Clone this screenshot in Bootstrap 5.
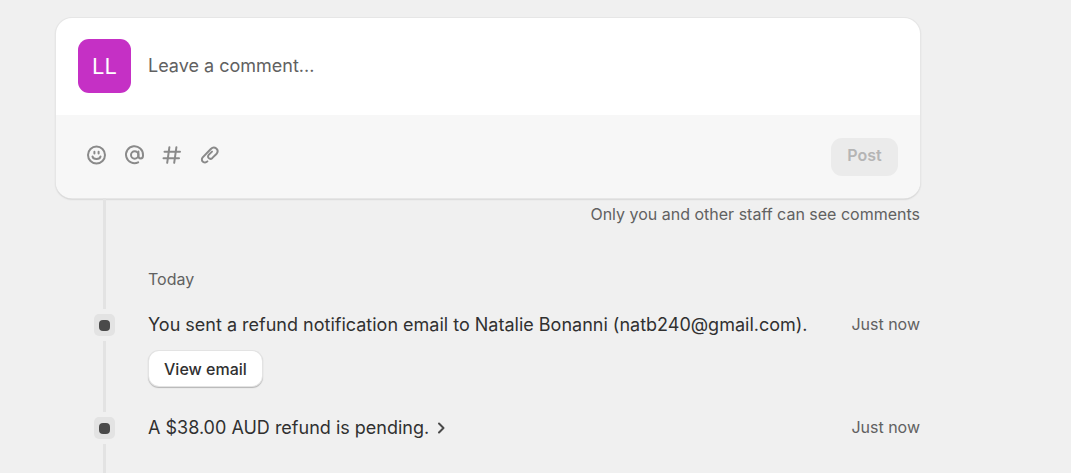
<!DOCTYPE html>
<html lang="en">
<head>
<meta charset="utf-8">
<meta name="viewport" content="width=device-width, initial-scale=1">
<title>Timeline</title>
<link rel="stylesheet" href="https://cdn.jsdelivr.net/npm/bootstrap@5.3.0/dist/css/bootstrap.min.css">
<style>
body{background:#f0f0f0;color:#303030;font-family:Inter,sans-serif;font-size:18px;line-height:22px}
.timeline-page{padding:18px 151px 0 56px}
.composer{border-radius:16px;background:#fff;box-shadow:0 0 0 1px #e6e6e6,0 1px 2px #a8a8a8}
.composer-top{padding:21px 22px 22px;gap:17px}
.avatar{width:53px;height:54px;border-radius:11px;background:#c530c5;color:#fff;font-size:22px}
.comment-input{color:#303030;font-size:18px;line-height:22px;outline:0}
.comment-input::placeholder{color:#616161;opacity:1}
.composer-bar{background:#f7f7f7;padding:23px 22px 22px 30px}
.tools{gap:16px;padding-bottom:4px}
.tool{width:22px;height:22px;color:#8a8a8a}
.tool svg,.chev svg{display:block}
.btn-post{width:67px;height:38px;border-radius:11px;font-size:16px;font-weight:600;line-height:20px}
.btn-post:disabled{background:#ebebeb;color:#b5b5b5;border:0;opacity:1}
.muted-text{color:#616161;font-size:16px;line-height:20px}
.rail{width:21px;margin:0 33px 0 38px}
.rail-line{width:3px;background:#e3e3e3}
.marker{width:21px;height:22px;border-radius:5px;background:#e3e3e3}
.marker span{width:11px;height:11px;border-radius:4px;background:#4a4a4a}
.intro{height:116px}
.staff-note{padding-top:6px}
.day{margin-top:45px}
.entry{min-height:103px}
.rail-gap{padding-bottom:5px}
.marker-gap{margin-bottom:5px}
.btn-view{height:35px;margin:15px 0 0 1px;padding:0 15px;border:0;border-radius:10px;background:#fff;color:#303030;font-size:16px;font-weight:500;line-height:20px;box-shadow:0 0 0 1px #e3e3e3,0 1px 1px 1px #b5b5b5}
.btn-view:hover{background:#fafafa}
.event-link{color:#303030;gap:6px}
</style>
</head>
<body>
<main class="timeline-page d-flex flex-column min-vh-100">
  <form class="composer overflow-hidden flex-shrink-0">
    <div class="composer-top d-flex align-items-center">
      <div class="avatar d-flex align-items-center justify-content-center flex-shrink-0">LL</div>
      <input class="comment-input border-0 bg-transparent p-0 flex-grow-1" type="text" placeholder="Leave a comment..." aria-label="Leave a comment">
    </div>
    <div class="composer-bar d-flex align-items-center justify-content-between">
      <div class="tools d-flex">
        <button class="tool btn border-0 p-0" type="button" aria-label="Add emoji">
          <svg width="22" height="22" viewBox="0 0 22 22" fill="none" stroke="currentColor" stroke-width="2" stroke-linecap="round"><circle cx="10.5" cy="11" r="8.5"/><path d="M8.4 7.8v1.7M12.6 7.8v1.7M6.5 12.5c.7 3.3 7.3 3.3 8 0"/></svg>
        </button>
        <button class="tool btn border-0 p-0" type="button" aria-label="Mention staff">
          <svg width="22" height="22" viewBox="0 0 22 22" fill="none" stroke="currentColor" stroke-width="2" stroke-linecap="round"><path d="M14.2 18.3A8.5 8.5 0 1 1 19 11v.8c0 3.5-4.6 3.5-4.6 0V7.6"/><circle cx="10.7" cy="11" r="3.7"/></svg>
        </button>
        <button class="tool btn border-0 p-0" type="button" aria-label="Add reference">
          <svg width="22" height="22" viewBox="0 0 22 22" fill="none" stroke="currentColor" stroke-width="2" stroke-linecap="round"><path d="M2.500 7.800h15.500M1.500 14.200h15.500M7.400 3.200 5.200 18.800M14.400 3.200l-2.200 15.600"/></svg>
        </button>
        <button class="tool btn border-0 p-0" type="button" aria-label="Attach file">
          <svg width="22" height="22" viewBox="0 0 22 22" fill="none" stroke="currentColor" stroke-width="2" stroke-linecap="round" stroke-linejoin="round"><path d="M7.400 17.400C4.500 20.200 0 16.600 2.700 13.400L10.800 5C14.500 1.300 19.900 6 16.400 10L12.400 13.900C9.800 16.300 6.400 13.200 8.900 10.600L12 7.600"/></svg>
        </button>
      </div>
      <button class="btn btn-post p-0 pb-1" type="submit" disabled>Post</button>
    </div>
  </form>

  <section class="intro d-flex flex-shrink-0">
    <div class="rail d-flex justify-content-center flex-shrink-0 rail-gap"><div class="rail-line"></div></div>
    <div class="flex-grow-1">
      <div class="staff-note muted-text text-end">Only you and other staff can see comments</div>
      <div class="day muted-text">Today</div>
    </div>
  </section>

  <article class="entry d-flex flex-shrink-0">
    <div class="rail rail-gap d-flex flex-column align-items-center flex-shrink-0">
      <div class="marker marker-gap d-flex align-items-center justify-content-center"><span></span></div>
      <div class="rail-line flex-grow-1"></div>
    </div>
    <div class="flex-grow-1">
      <div class="d-flex justify-content-between">
        <div>You sent a refund notification email to Natalie Bonanni (natb240@gmail.com).</div>
        <time class="muted-text text-nowrap">Just now</time>
      </div>
      <button class="btn btn-view" type="button">View email</button>
    </div>
  </article>

  <article class="d-flex flex-grow-1">
    <div class="rail d-flex flex-column align-items-center flex-shrink-0">
      <div class="marker marker-gap d-flex align-items-center justify-content-center"><span></span></div>
      <div class="rail-line flex-grow-1"></div>
    </div>
    <div class="flex-grow-1 d-flex justify-content-between align-items-start">
      <a class="event-link text-decoration-none d-flex align-items-center" href="#">A $38.00 AUD refund is pending.
        <span class="chev"><svg width="12" height="14" viewBox="0 0 12 14" fill="none" stroke="#4a4a4a" stroke-width="2" stroke-linecap="round" stroke-linejoin="round"><path d="m4 2.500 4.500 4.500L4 11.500"/></svg></span>
      </a>
      <time class="muted-text text-nowrap">Just now</time>
    </div>
  </article>
</main>
<script src="https://cdn.jsdelivr.net/npm/bootstrap@5.3.0/dist/js/bootstrap.bundle.min.js"></script>
</body>
</html>
